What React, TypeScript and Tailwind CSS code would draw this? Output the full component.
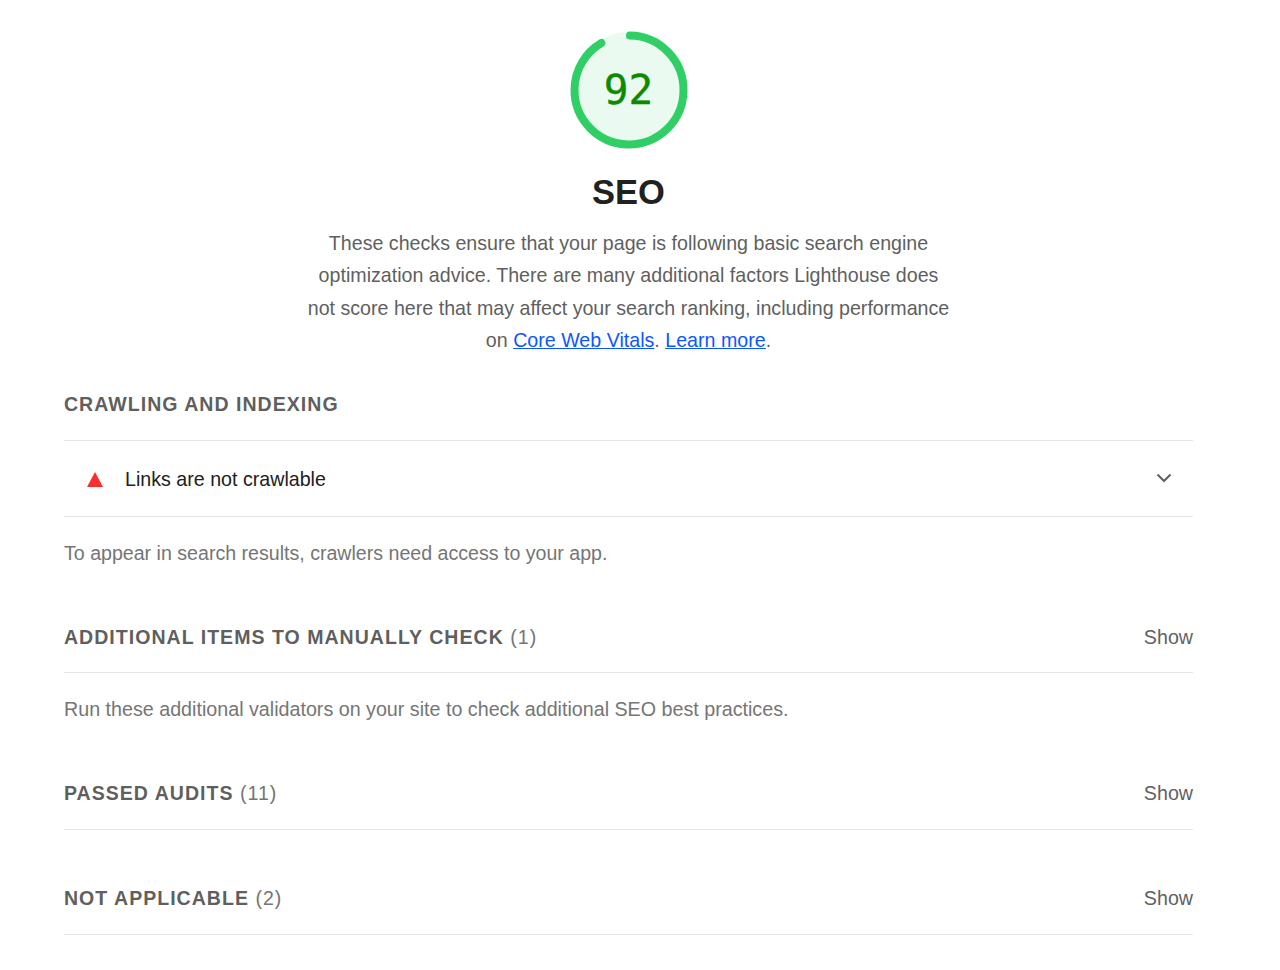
import React from 'react';

const font = { fontFamily: '"Liberation Sans", Arial, sans-serif' };

const Gauge = () => (
  <svg width="120" height="120" viewBox="0 0 120 120" className="block">
    <circle cx="60" cy="60" r="58" fill="#eafaf1" />
    <circle
      cx="60"
      cy="60"
      r="54.5"
      fill="none"
      stroke="#30cf66"
      strokeWidth="8"
      strokeLinecap="round"
      strokeDasharray="312 343"
      transform="rotate(-89 60 60)"
    />
  </svg>
);

const GroupRow = ({ title, count, className }: { title: string; count: string; className: string }) => (
  <div className={`flex items-center justify-between border-b border-[#e6e6e6] ${className}`}>
    <div className="text-[19.55px] font-bold tracking-[1.02px] text-[#5f5f5f]">
      {title} <span className="font-normal text-[#757575]">{count}</span>
    </div>
    <span className="text-[19.65px] text-[#616161]">Show</span>
  </div>
);

export default function App() {
  return (
    <div style={font} className="w-[1280px] h-[970px] bg-white overflow-hidden px-16 pt-[30px]">
      <div className="w-[1129px]">
        {/* Score header */}
        <div className="flex flex-col items-center">
          <div className="relative w-[120px] h-[120px]">
            <Gauge />
            <div
              className="absolute inset-0 flex items-center justify-center pt-[2px] text-[41px] text-[#0c8a00] [-webkit-text-stroke:0.4px_#0c8a00]"
              style={{ fontFamily: '"DejaVu Sans Mono", monospace' }}
            >
              92
            </div>
          </div>
          <h1 className="mt-[19px] text-[34.5px] leading-[46px] font-bold text-[#212121]">SEO</h1>
          <p className="mt-[12px] w-[652px] text-center text-[19.65px] leading-[32.4px] text-[#5f5f5f]">
            These checks ensure that your page is following basic search engine optimization advice. There are many additional factors Lighthouse does not score here that may affect your search ranking, including performance on{' '}
            <a className="text-[#0b57ff] underline">Core Web Vitals</a>. <a className="text-[#0b57ff] underline">Learn more</a>.
          </p>
        </div>

        {/* Crawling */}
        <div className="mt-[25px]">
          <div className="h-[59px] pb-[12px] flex items-center border-b border-[#e6e6e6] text-[19.55px] font-bold tracking-[1.02px] text-[#5f5f5f]">
            CRAWLING AND INDEXING
          </div>
          <div className="h-[76px] flex items-center justify-between border-b border-[#e6e6e6] pl-[23px] pr-[21px]">
            <div className="flex items-center gap-[22px] pt-[2px]">
              <svg width="16" height="15" viewBox="0 0 16 15">
                <polygon points="8,0 16,15 0,15" fill="#fb2d2d" />
              </svg>
              <span className="pt-[2px] text-[19.65px] text-[#212121]">Links are not crawlable</span>
            </div>
            <svg width="16" height="10" viewBox="0 0 16 10" fill="none" stroke="#5f5f5f" strokeWidth="2">
              <path d="M1.5 1.5 8 8l6.5-6.5" />
            </svg>
          </div>
          <p className="mt-[20px] text-[19.6px] leading-[32px] text-[#757575]">
            To appear in search results, crawlers need access to your app.
          </p>
        </div>

        {/* Manual checks */}
        <div className="mt-[34px]">
          <GroupRow title="ADDITIONAL ITEMS TO MANUALLY CHECK" count="(1)" className="h-[70px] pt-[1px]" />
          <p className="mt-[20px] text-[19.7px] leading-[32px] text-[#757575]">
            Run these additional validators on your site to check additional SEO best practices.
          </p>
        </div>

        <GroupRow title="PASSED AUDITS" count="(11)" className="mt-[35px] h-[70px] pb-[1px]" />
        <GroupRow title="NOT APPLICABLE" count="(2)" className="mt-[35px] h-[70px] pb-[1px]" />
      </div>
    </div>
  );
}
